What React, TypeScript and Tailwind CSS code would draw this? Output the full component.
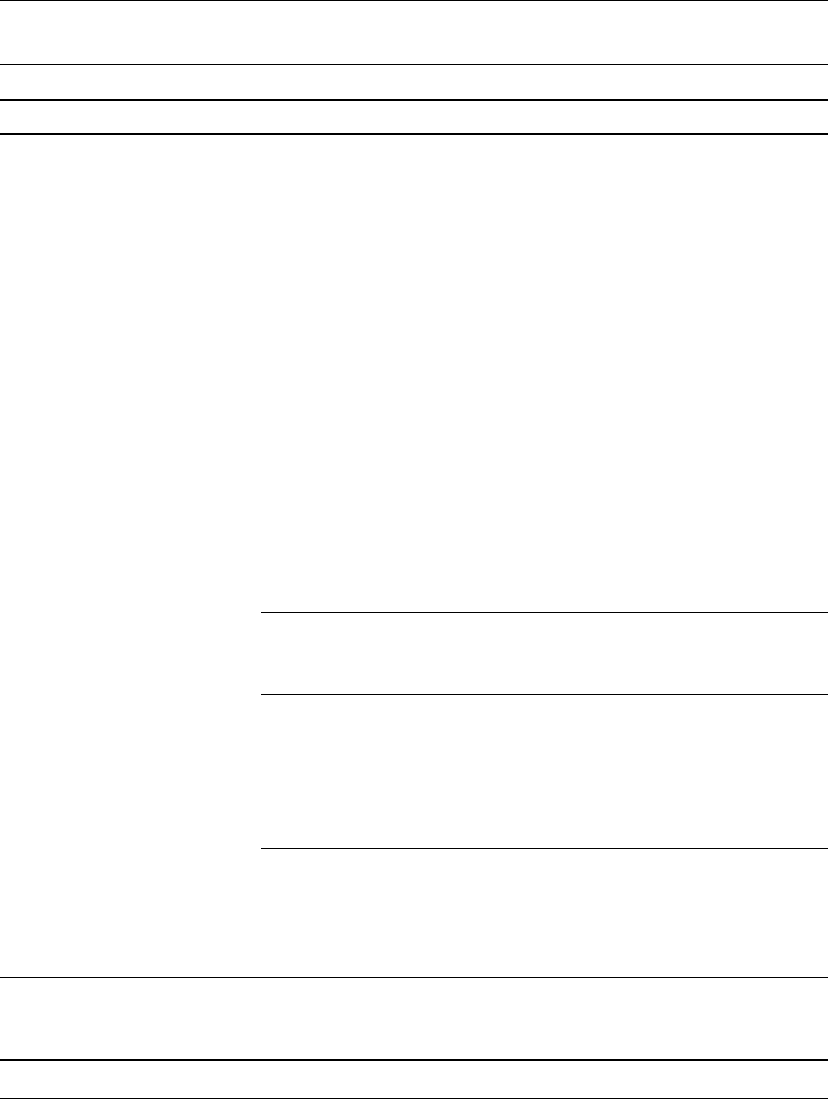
import React from 'react'

const App: React.FC = () => {
    return (
        <div className="w-[828px] h-[1099px] bg-white font-['Liberation_Sans',sans-serif] text-black">
            <div className="h-[65px] border-y border-black"></div>
            <div className="h-[36px] border-b-2 border-black"></div>
            <div className="h-[34px] border-b-2 border-black"></div>
            <div className="flex h-[843px] border-b border-black">
                <div className="w-[261px] shrink-0"></div>
                <div className="flex flex-col flex-1">
                    <div className="h-[478px] border-b border-black"></div>
                    <div className="h-[82px] border-b border-black"></div>
                    <div className="h-[154px] border-b border-black"></div>
                    <div className="flex-1"></div>
                </div>
            </div>
            <div className="h-[83px] border-b-2 border-black"></div>
            <div className="h-[38px] border-b border-black"></div>
        </div>
    )
}

export default App
